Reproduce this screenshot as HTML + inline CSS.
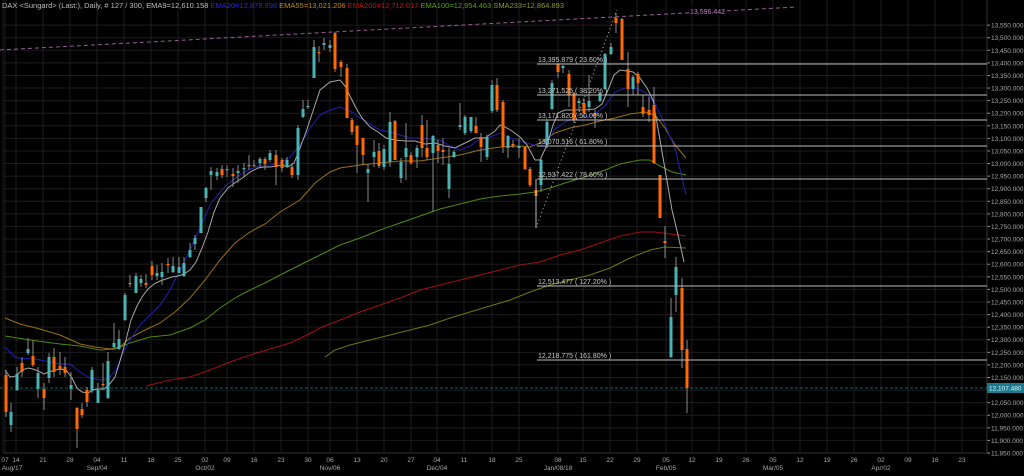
<!DOCTYPE html>
<html><head><meta charset="utf-8"><style>
html,body{margin:0;padding:0;background:#000;width:1024px;height:476px;overflow:hidden}
svg{display:block}
text{font-family:"Liberation Sans",sans-serif}
</style></head><body>
<svg id="s" width="1024" height="476" xmlns="http://www.w3.org/2000/svg">
<rect width="1024" height="476" fill="#000"/>
<g id="grid"></g>
<g id="lines"></g>
<g id="candles"></g>
<g id="over"></g>
<text x="2" y="8" font-size="7.5" fill="#bdbdbd">DAX &lt;Sungard&gt; (Last:), Daily, # 127 / 300, EMA9=12,610.158 <tspan fill="#2a2ad0">EMA20=12,879.898</tspan> <tspan fill="#c08a20">EMA55=13,021.206</tspan> <tspan fill="#d01010">EMA200=12,712.017</tspan> <tspan fill="#5aa010">EMA100=12,954.463</tspan> <tspan fill="#8a9a20">SMA233=12,864.893</tspan></text>
</svg>
<script>
const NS="http://www.w3.org/2000/svg";
function el(p,t,a,txt){const e=document.createElementNS(NS,t);for(const k in a)e.setAttribute(k,a[k]);if(txt!==undefined)e.textContent=txt;p.appendChild(e);return e;}
const G=document.getElementById('grid'),L=document.getElementById('lines'),C=document.getElementById('candles'),O=document.getElementById('over');
const y=p=>453-(p-11850)*0.2517;
for(let p=11850;p<=13550;p+=50){const yy=y(p);
 el(G,'line',{x1:3,x2:987,y1:yy,y2:yy,stroke:'#1c1c1c','stroke-width':1});
 el(G,'line',{x1:987,x2:990,y1:yy,y2:yy,stroke:'#999','stroke-width':1});
 el(G,'text',{x:991,y:yy+2.5,'font-size':6.5,fill:'#a8a8a8'},p.toLocaleString('en-US')+'.000');}
el(G,'line',{x1:987,x2:987,y1:0,y2:453,stroke:'#333'});
el(G,'line',{x1:3,x2:987,y1:453,y2:453,stroke:'#333'});
el(G,'line',{x1:3,x2:3,y1:0,y2:453,stroke:'#1c1c1c'});
const dates=[[5,'07'],[16,'14'],[43,'21'],[70,'28'],[97,'04'],[124,'11'],[151,'18'],[178,'25'],[205,'02'],[227,'09'],[254,'16'],[281,'23'],[308,'30'],[330,'06'],[357,'13'],[384,'20'],[411,'27'],[437,'04'],[464,'11'],[492,'18'],[519,'25'],[558,'08'],[583,'15'],[610,'22'],[637,'29'],[666,'05'],[692,'12'],[719,'19'],[746,'26'],[773,'05'],[800,'12'],[827,'19'],[854,'26'],[881,'02'],[908,'09'],[935,'16'],[962,'23']];
dates.forEach(([x,t])=>{el(G,'line',{x1:x,x2:x,y1:0,y2:453,stroke:'#1c1c1c'});el(G,'text',{x:x,y:462,'font-size':6.5,fill:'#a8a8a8','text-anchor':'middle'},t);});
[[12,'Aug/17'],[97,'Sep/04'],[205,'Oct/02'],[330,'Nov/06'],[437,'Dec/04'],[558,'Jan/08/18'],[666,'Feb/05'],[773,'Mar/05'],[881,'Apr/02']].forEach(([x,t])=>el(G,'text',{x:x,y:470,'font-size':6.5,fill:'#a8a8a8','text-anchor':'middle'},t));
el(L,'line',{x1:0,y1:50,x2:797,y2:7,stroke:'#9a5a9a','stroke-dasharray':'4,3','stroke-width':1});
el(O,'rect',{x:689,y:7,width:34,height:8,fill:'#000'});
el(O,'text',{x:690,y:14,'font-size':7,fill:'#c080c0'},'13,596.442');
el(L,'line',{x1:0,y1:388,x2:987,y2:388,stroke:'#15606e','stroke-dasharray':'3,2'});
el(O,'rect',{x:987,y:383,width:37,height:10,fill:'#1a7a8e'});
el(O,'text',{x:989,y:390.5,'font-size':6.5,fill:'#e8f8ff'},'12,107.480');
function pl(pts,c){el(L,'polyline',{points:pts.map(p=>p.join(',')).join(' '),fill:'none',stroke:c,'stroke-width':1});}
pl([[146,386],[170,380],[190,377],[210,370],[230,362],[250,355],[270,349],[290,343],[305,336],[320,328],[340,320],[360,312],[380,305],[400,298],[420,290],[440,285],[460,280],[480,275],[500,270],[520,265],[540,262],[560,255],[580,250],[600,243],[620,236],[640,232],[655,232],[670,234],[686,236]],'#a01010');
pl([[325,357],[335,350],[350,345],[370,340],[390,335],[410,330],[430,325],[450,318],[470,312],[490,306],[510,300],[530,292],[550,285],[570,280],[590,275],[610,268],[630,258],[650,250],[665,247],[686,248]],'#6a7a10');
pl([[5,336],[30,340],[60,344],[80,346],[100,350],[115,349],[130,343],[150,337],[170,335],[190,328],[205,320],[220,308],[235,298],[250,290],[265,283],[280,275],[300,265],[320,255],[340,245],[360,238],[380,230],[400,223],[420,216],[440,209],[460,204],[480,199],[500,196],[520,194],[535,192],[550,188],[565,183],[585,177],[605,170],[620,164],[640,160],[650,160],[660,166],[672,172],[686,175]],'#4a8a10');
pl([[5,318],[20,324],[40,329],[60,335],[80,344],[95,347],[110,349],[120,347],[130,338],[145,330],[160,323],[175,312],[190,298],[205,280],[220,260],[235,243],[250,232],[265,224],[280,212],[300,200],[315,183],[330,172],[340,168],[360,165],[380,163],[400,161],[420,161],[440,158],[460,155],[480,150],[500,147],[520,146],[530,147],[540,143],[555,133],[570,128],[585,125],[600,121],[615,118],[630,114],[645,112],[655,115],[665,128],[675,145],[686,158]],'#9a7010');
pl([[5,347],[15,357],[22,359],[30,358],[40,360],[50,362],[60,364],[70,364],[80,372],[90,378],[100,380],[108,379],[116,370],[122,355],[130,340],[140,325],[150,315],[160,305],[170,290],[180,270],[190,250],[200,228],[210,205],[220,192],[230,182],[240,175],[250,169],[260,166],[270,165],[280,163],[290,157],[300,145],[310,128],[320,115],[330,110],[340,107],[350,111],[360,118],[370,124],[380,130],[390,132],[400,135],[410,138],[420,138],[430,139],[440,140],[450,146],[460,150],[470,146],[480,139],[490,137],[500,133],[510,138],[520,141],[530,144],[540,146],[548,140],[555,129],[565,122],[575,118],[585,117],[595,114],[605,106],[615,92],[625,88],[635,88],[645,92],[655,103],[665,125],[675,148],[686,195]],'#2020b0');
pl([[5,370],[10,377],[16,376],[22,370],[28,368],[33,369],[38,371],[44,374],[49,372],[55,370],[60,369],[66,370],[72,378],[77,388],[82,392],[88,393],[93,390],[98,389],[104,389],[109,385],[115,377],[120,361],[126,340],[131,320],[137,306],[142,297],[148,289],[154,284],[160,281],[166,279],[172,277],[178,276],[184,274],[190,270],[196,262],[202,248],[208,232],[214,212],[220,198],[228,188],[236,182],[244,177],[250,172],[258,168],[264,167],[270,167],[276,166],[282,165],[288,167],[294,163],[300,148],[306,132],[312,114],[320,90],[330,82],[340,80],[345,86],[350,96],[356,108],[362,118],[370,127],[378,132],[386,138],[395,140],[405,141],[415,141],[425,144],[435,143],[445,146],[455,148],[465,143],[475,138],[485,138],[495,131],[500,125],[505,127],[512,131],[520,137],[527,145],[535,160],[540,160],[547,145],[553,125],[558,113],[565,110],[575,110],[585,110],[595,109],[602,104],[608,90],[614,75],[620,70],[627,71],[633,72],[640,78],[647,88],[653,100],[660,140],[666,175],[672,210],[678,235],[684,262]],'#a8a8a8');
[[64,'13,395.879 ( 23.60% )'],[95,'13,271.525 ( 38.20% )'],[120,'13,171.820 ( 50.00% )'],[146,'13,070.516 ( 61.80% )'],[179,'12,937.422 ( 78.60% )'],[286,'12,513.477 ( 127.20% )'],[360,'12,218.775 ( 161.80% )']].forEach(([yy,t])=>{
 el(O,'line',{x1:537,x2:987,y1:yy,y2:yy,stroke:'#bbb','stroke-width':1});
 el(O,'text',{x:538,y:yy-2,'font-size':7,fill:'#c8c8c8'},t);});
el(O,'line',{x1:536,x2:536,y1:179,y2:228,stroke:'#bbb'});
el(O,'line',{x1:536,y1:228,x2:617,y2:10,stroke:'#bbb','stroke-dasharray':'1,3'});
const cd=[[6,375,412,370,417,0],[11,412,425,403,432,1],[17,374,390,367,391,1],[22,363,372,357,377,0],[28,349,353,338,355,1],[33,356,365,340,367,0],[38,373,389,367,398,1],[44,389,398,383,410,0],[49,357,378,353,383,1],[54,357,372,348,377,0],[60,366,370,352,375,0],[65,367,373,357,377,0],[71,385,389,372,400,1],[77,408,429,407,448,0],[82,409,415,403,418,0],[87,390,402,387,407,0],[92,370,391,367,393,1],[98,390,403,383,403,1],[103,384,385,363,390,0],[108,361,398,352,399,1],[114,343,347,323,348,1],[119,339,349,330,350,1],[125,295,320,293,321,1],[130,283,284,275,287,0],[136,276,293,273,293,1],[141,279,283,275,287,1],[146,283,285,274,288,0],[152,266,275,261,280,0],[157,273,276,265,280,1],[162,272,277,263,285,1],[168,264,265,258,273,0],[173,266,272,257,273,1],[179,267,273,257,273,1],[184,263,276,257,277,1],[190,250,257,243,258,1],[195,238,244,235,250,1],[201,207,233,207,233,1],[206,188,198,187,202,1],[211,171,175,167,190,1],[217,172,176,168,180,1],[222,169,175,165,178,0],[227,169,170,165,177,1],[233,174,176,168,187,0],[238,171,173,165,183,1],[244,168,169,163,177,1],[249,165,166,155,170,0],[254,165,166,160,167,0],[260,159,163,157,167,1],[265,159,164,157,170,0],[270,153,160,150,162,1],[276,155,167,150,185,0],[282,160,168,158,172,0],[287,160,167,157,168,1],[292,167,175,163,178,0],[298,128,175,125,180,1],[303,109,117,100,118,1],[308,106,107,100,109,1],[314,47,78,40,78,1],[319,52,53,46,62,0],[324,43,45,38,50,1],[330,45,48,40,52,1],[335,33,69,32,72,0],[341,62,67,60,77,0],[347,68,118,64,118,0],[352,120,132,118,135,0],[357,126,145,125,173,0],[363,138,155,138,165,0],[368,169,173,164,202,1],[374,152,157,140,167,1],[379,151,166,143,168,0],[384,149,167,145,170,1],[390,122,162,112,167,1],[395,121,160,120,160,0],[401,162,178,158,183,1],[406,148,157,123,180,1],[411,155,163,152,165,0],[417,148,157,145,168,1],[422,125,148,115,157,0],[427,148,157,120,160,0],[433,136,153,135,212,1],[438,145,151,140,163,0],[443,150,152,138,165,0],[449,164,189,148,198,1],[454,152,157,150,158,1],[460,125,127,103,130,1],[465,117,133,115,135,1],[471,117,131,117,133,1],[476,126,133,117,133,0],[481,137,147,133,162,0],[487,137,157,135,160,1],[492,85,111,80,113,1],[497,85,110,78,112,0],[503,102,147,100,153,0],[508,136,148,135,158,1],[513,144,146,140,148,0],[519,146,148,138,158,1],[525,147,169,147,170,0],[530,169,185,167,187,0],[536,190,196,182,228,0],[541,160,185,158,192,1],[547,122,145,120,148,1],[552,83,109,80,110,1],[558,64,72,63,78,0],[563,66,68,65,73,1],[569,74,95,70,107,0],[574,93,120,92,123,0],[579,101,103,98,110,1],[584,103,113,98,117,0],[589,101,107,75,112,1],[595,113,116,110,128,0],[600,93,101,92,102,1],[605,54,89,53,90,1],[611,47,54,43,55,1],[616,18,23,13,33,0],[622,19,60,18,60,0],[628,69,89,52,107,0],[633,77,89,75,95,1],[638,74,83,72,95,0],[643,107,114,95,117,0],[649,110,115,97,122,0],[654,105,163,87,164,0],[660,175,218,175,218,0],[665,241,243,226,258,0],[671,317,357,298,358,1],[676,267,295,257,312,1],[682,288,350,278,368,0],[687,349,388,340,413,0]];
cd.forEach(([x,bt,bb,wt,wb,u])=>{
 el(C,'line',{x1:x,x2:x,y1:wt,y2:wb,stroke:'#8a8a8a','stroke-width':1});
 el(C,'rect',{x:x-1.5,y:bt,width:3,height:Math.max(1.2,bb-bt),fill:u?'#4ab3b3':'#ff6a00'});});
</script>
</body></html>
